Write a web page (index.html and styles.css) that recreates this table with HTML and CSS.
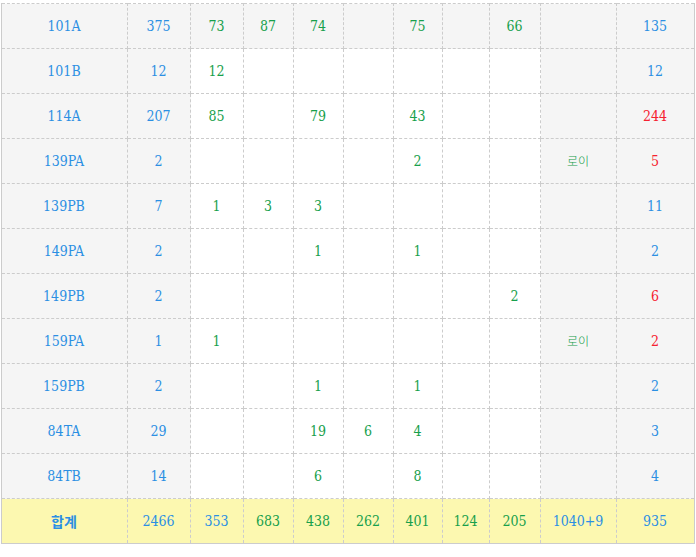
FILE: index.html
```html
<!DOCTYPE html>
<html lang="ko">
<head>
<meta charset="utf-8">
<link rel="stylesheet" href="styles.css">
</head>
<body>
<div class="wrap">
<table class="grid">
<colgroup>
<col class="w1"><col class="w2"><col class="w3"><col class="w4"><col class="w5"><col class="w6"><col class="w7"><col class="w8"><col class="w9"><col class="w10"><col class="w11">
</colgroup>
<tbody>
<tr class="hl"><td class="g b">101A</td><td class="g b">375</td><td class="gr">73</td><td class="gr">87</td><td class="gr">74</td><td></td><td class="gr">75</td><td></td><td class="gr">66</td><td class="g"></td><td class="g b">135</td></tr>
<tr><td class="g b">101B</td><td class="g b">12</td><td class="gr">12</td><td></td><td></td><td></td><td></td><td></td><td></td><td class="g"></td><td class="g b">12</td></tr>
<tr><td class="g b">114A</td><td class="g b">207</td><td class="gr">85</td><td></td><td class="gr">79</td><td></td><td class="gr">43</td><td></td><td></td><td class="g"></td><td class="g r">244</td></tr>
<tr><td class="g b">139PA</td><td class="g b">2</td><td></td><td></td><td></td><td></td><td class="gr">2</td><td></td><td></td><td class="g note">로이</td><td class="g r">5</td></tr>
<tr><td class="g b">139PB</td><td class="g b">7</td><td class="gr">1</td><td class="gr">3</td><td class="gr">3</td><td></td><td></td><td></td><td></td><td class="g"></td><td class="g b">11</td></tr>
<tr><td class="g b">149PA</td><td class="g b">2</td><td></td><td></td><td class="gr">1</td><td></td><td class="gr">1</td><td></td><td></td><td class="g"></td><td class="g b">2</td></tr>
<tr><td class="g b">149PB</td><td class="g b">2</td><td></td><td></td><td></td><td></td><td></td><td></td><td class="gr">2</td><td class="g"></td><td class="g r">6</td></tr>
<tr><td class="g b">159PA</td><td class="g b">1</td><td class="gr">1</td><td></td><td></td><td></td><td></td><td></td><td></td><td class="g note">로이</td><td class="g r">2</td></tr>
<tr><td class="g b">159PB</td><td class="g b">2</td><td></td><td></td><td class="gr">1</td><td></td><td class="gr">1</td><td></td><td></td><td class="g"></td><td class="g b">2</td></tr>
<tr><td class="g b">84TA</td><td class="g b">29</td><td></td><td></td><td class="gr">19</td><td class="gr">6</td><td class="gr">4</td><td></td><td></td><td class="g"></td><td class="g b">3</td></tr>
<tr><td class="g b">84TB</td><td class="g b">14</td><td></td><td></td><td class="gr">6</td><td></td><td class="gr">8</td><td></td><td></td><td class="g"></td><td class="g b">4</td></tr>
<tr class="sum"><td class="b kr">합계</td><td class="b">2466</td><td class="b">353</td><td class="gr">683</td><td class="gr">438</td><td class="gr">262</td><td class="gr">401</td><td class="gr">124</td><td class="gr">205</td><td class="b">1040+9</td><td class="b">935</td></tr>
</tbody>
</table>
</div>
</body>
</html>
```
FILE: styles.css
```css
html, body {
  margin: 0;
  padding: 0;
  background: #ffffff;
}
.wrap {
  padding: 3px 0 0 1px;
}
.grid {
  border-collapse: collapse;
  table-layout: fixed;
  width: 693px;
  border-left: 1px solid #cccccc;
  border-right: 1px solid #cccccc;
  border-bottom: 1px solid #cccccc;
  font-family: "DejaVu Serif Condensed", "DejaVu Serif", "Noto Sans CJK KR", serif;
  font-size: 14px;
  line-height: 16px;
}
.w1 { width: 126px; }
.w2 { width: 63px; }
.w3 { width: 53px; }
.w4 { width: 50px; }
.w5 { width: 50px; }
.w6 { width: 50px; }
.w7 { width: 49px; }
.w8 { width: 47px; }
.w9 { width: 51px; }
.w10 { width: 76px; }
.w11 { width: 78px; }
.grid td {
  height: 43px;
  padding: 0 1px 1px 0;
  text-align: center;
  vertical-align: middle;
  border: 1px dashed #cccccc;
  background: #ffffff;
}
.grid tr.hl td,
.grid td.g {
  background: #f5f5f5;
}
.grid tr.sum td {
  background: #fcf8b0;
}
.grid tr:last-child td {
  border-bottom: 1px solid #cccccc;
}
.b { color: #2b8fe3; }
.gr { color: #17a04c; }
.r { color: #f5222f; }
.note {
  color: #17a04c;
  font-size: 12px;
  font-family: "Noto Sans CJK KR", sans-serif;
  font-weight: 300;
}
.kr {
  font-family: "Noto Sans CJK KR", sans-serif;
  font-weight: 700;
}
```
